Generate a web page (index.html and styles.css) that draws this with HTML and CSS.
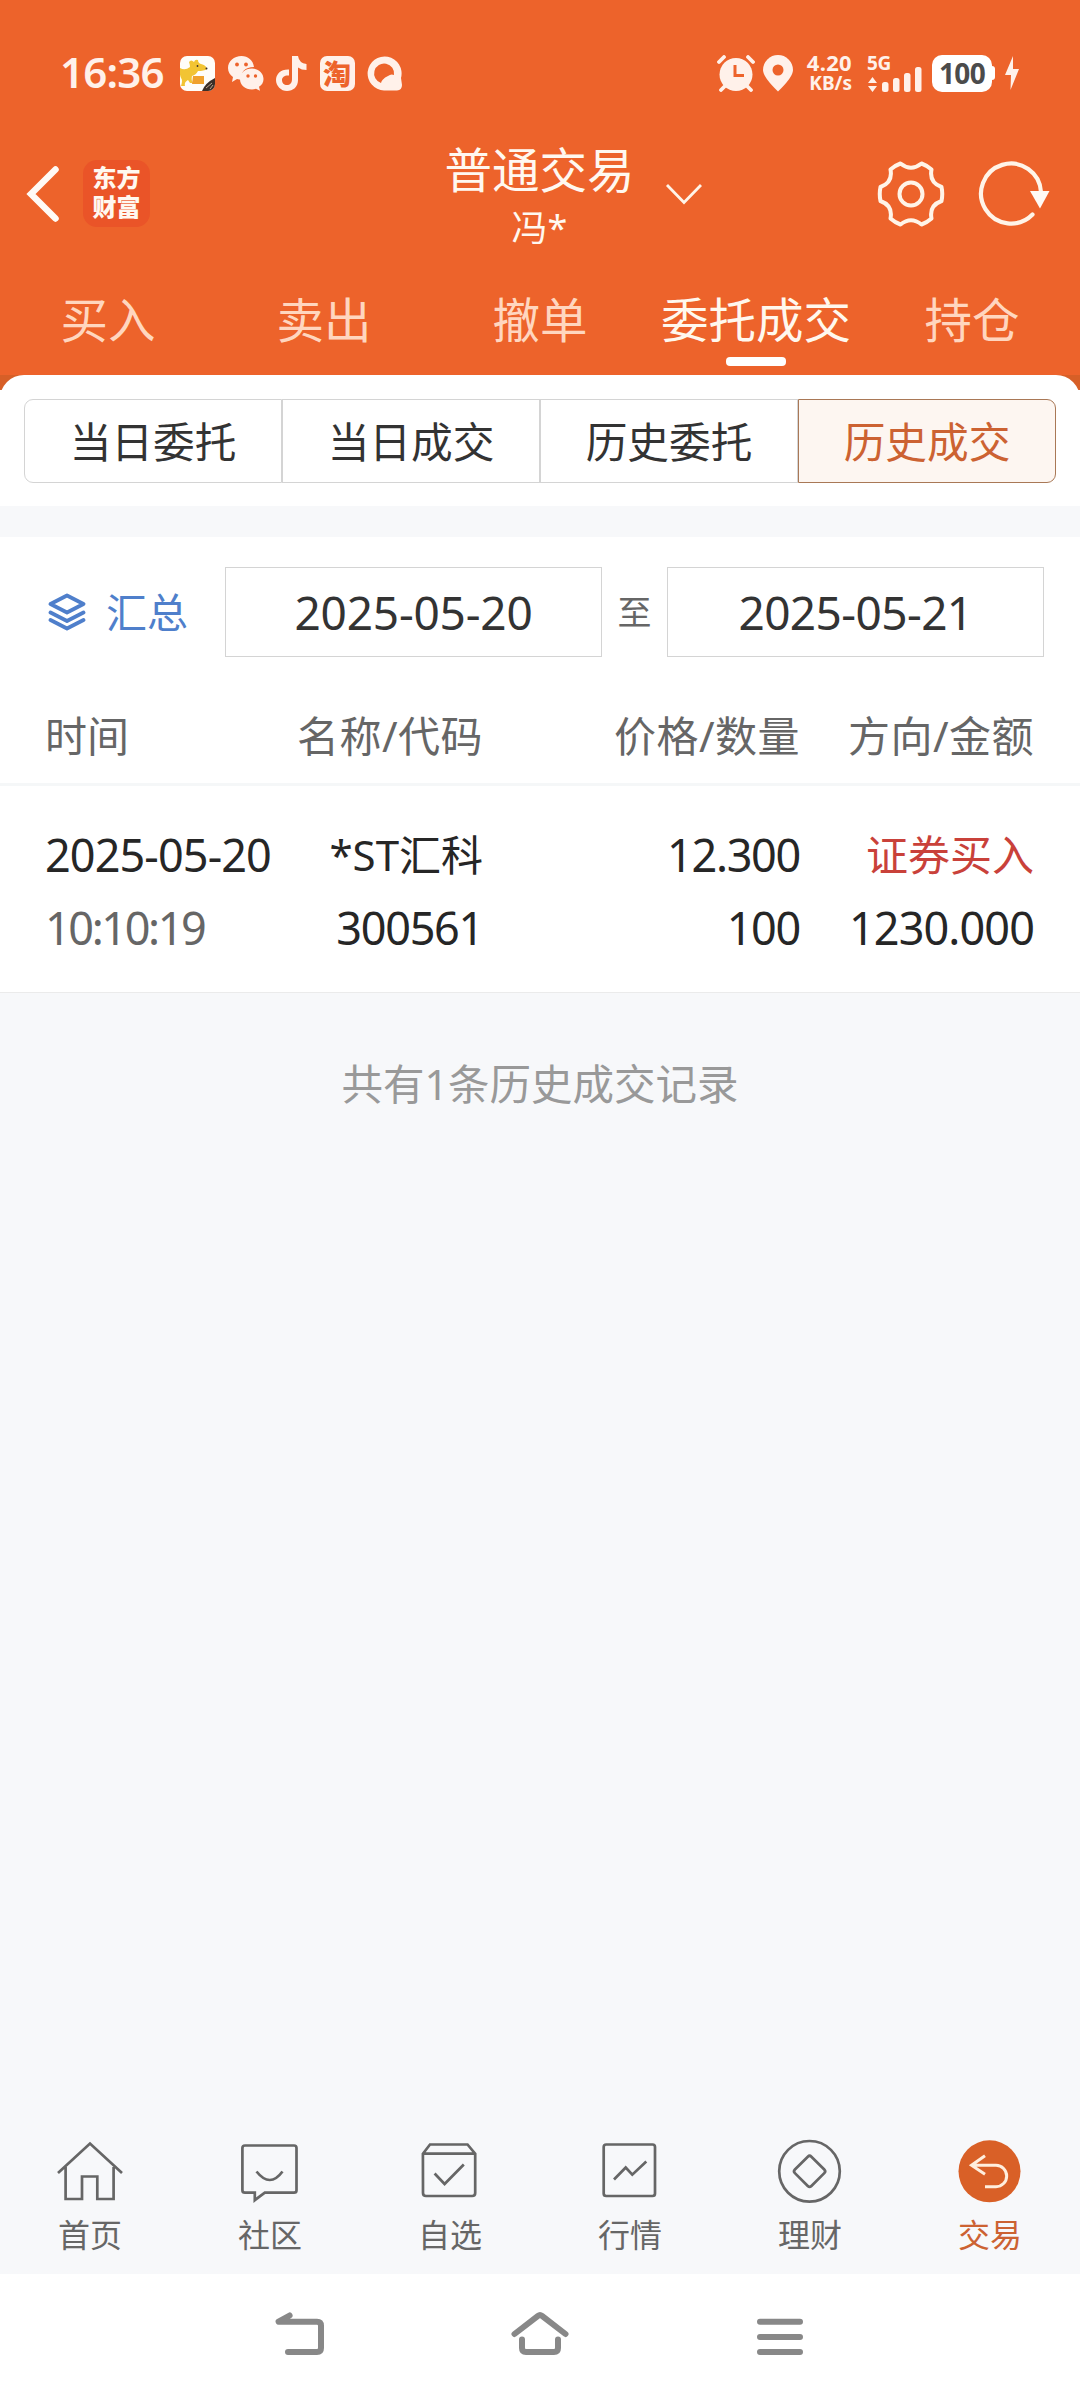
FILE: index.html
```html
<!DOCTYPE html>
<html lang="zh-CN">
<head>
<meta charset="utf-8">
<title>历史成交</title>
<link rel="stylesheet" href="styles.css">
</head>
<body>
<div class="screen">
  <header class="top">
    <div class="status">
      <span class="clock">16:36</span>
      <div class="status-apps">
        <svg width="35" height="35" viewBox="0 0 35 35">
          <clipPath id="app-clip"><rect width="35" height="35" rx="7"/></clipPath>
          <g clip-path="url(#app-clip)">
            <rect width="35" height="35" fill="#fffdf8"/>
            <path d="M0 12q5 3 10-1q0-2-1-5q2-3 5 0q1-3 4-2q0 3 3 4q5 1 6 5q-3 2-9 2q-2 4-6 5q-1 5 1 7h-3l-2-3q-4 2-3 6H1q2-6 0-8q-2-5-1-10z" fill="#f2c433"/>
            <path d="M13 20h11v8H12z" fill="#f0a12c"/>
            <path d="M35 22v13H22q3-8 13-13z" fill="#3c2f28"/>
            <path d="M26 32l6-5M30 33l3-4" stroke="#b8a590" stroke-width="1"/>
            <circle cx="17.500" cy="10" r=".9" fill="#3c2f28"/>
            <circle cx="26.500" cy="12.500" r="1" fill="#3c2f28"/>
          </g>
        </svg>
        <svg width="36" height="35" viewBox="0 0 36 35" fill="#fff1ea">
          <path d="M13.500 0C6 0 0 5 0 12c0 4 2 7 5 9l-1 5 5-3q3 1 5 .8C12 16 17 11 26 11 25 4 20 0 13.500 0z"/>
          <path d="M24 12.500c-7 0-12 4.500-12 10.500s5 10.500 12 10.500q2 0 4-.7l4 2-1-4c3-2 4.500-4.500 4.500-7.800 0-6-5-10.500-11.500-10.500z"/>
          <g fill="#ed632b"><circle cx="9" cy="8.500" r="1.900"/><circle cx="18" cy="8.500" r="1.900"/><circle cx="20" cy="20" r="1.700"/><circle cx="27.500" cy="20" r="1.700"/></g>
        </svg>
        <svg width="31" height="35" viewBox="0 0 31 35" fill="#fff1ea">
          <path d="M16 0h6q1 7 8.500 8v6q-5 0-8.500-2.500V24c0 7-5 11-11 11S0 30 0 24s5-11 13-10.500v6C9 19 6 21 6 24s2 5 5 5 5-2 5-6z"/>
        </svg>
        <span class="tao">淘</span>
        <svg width="35" height="35" viewBox="0 0 35 35">
          <path d="M17 34.500A17 17 0 1 1 34 22l1 7q0 5-5 5.500z" fill="#fff1ea"/>
          <path d="M14 27A10 10 0 1 1 27 19q-3-1.500-6 1-3 1-5.500 4-1 1-1.500 3z" fill="#ed632b"/>
        </svg>
      </div>
      <div class="status-info">
        <svg width="38" height="37" viewBox="0 0 38 37">
          <g stroke="#fff1ea" stroke-width="3.800" stroke-linecap="round"><path d="M2 7l5-5M36 7l-5-5M9 30l-5 5M29 30l5 5"/></g>
          <circle cx="19" cy="19.500" r="16.500" fill="#fff1ea"/>
          <path d="M18 10v10.500h9" fill="none" stroke="#ed632b" stroke-width="3"/>
        </svg>
        <svg width="30" height="37" viewBox="0 0 30 37">
          <path d="M15 36.500Q0 22 0 15a15 15 0 0 1 30 0Q30 22 15 36.500z" fill="#fff1ea"/><circle cx="15" cy="15" r="5.500" fill="#ed632b"/>
        </svg>
        <div class="speed"><span>4.20</span><span class="unit">KB/s</span></div>
        <div class="cell">
          <span class="gen">5G</span>
          <svg width="56" height="37" viewBox="0 0 56 37" fill="#fff1ea">
            <path d="M5.500 22l4.500 6H1zM5.500 37l4.500-6H1z"/>
            <rect x="15" y="27" width="6.500" height="10" rx="2.500"/><rect x="26" y="23" width="6.500" height="14" rx="2.500"/><rect x="37" y="18" width="6.500" height="19" rx="2.500"/><rect x="48" y="12" width="6.500" height="25" rx="2.500"/>
          </svg>
        </div>
        <div class="battery"><span>100</span></div>
        <svg class="bolt" width="14" height="34" viewBox="0 0 14 34" fill="#fff1ea"><path d="M8 0L0 19h6L5.500 34 14 13H8z"/></svg>
      </div>
    </div>

    <div class="titlebar">
      <div class="side">
        <svg width="36" height="60" viewBox="0 0 36 60"><path d="M31.500 5.500L7 30l24.500 24.500" fill="none" stroke="#fffaf5" stroke-width="6.500" stroke-linecap="round"/></svg>
        <div class="brand"><span>东方</span><span>财富</span></div>
      </div>
      <div class="account"><span class="name">普通交易</span><span class="user">冯*</span></div>
      <div class="side right">
        <svg class="drop" width="40" height="24" viewBox="0 0 40 24"><path d="M3 3l17 17.500L37 3" fill="none" stroke="#fff4e8" stroke-width="2.800"/></svg>
        <svg width="68" height="68" viewBox="0 0 68 68" fill="none" stroke="#fff4e8" stroke-width="4">
          <path stroke-linejoin="round" d="M23.500 3.500Q34 12 44.500 3.500Q50 5.500 54.500 9.500Q52 22.500 64.500 27Q66 34 64.500 41Q52 45.500 54.500 58.500Q50 62.500 44.500 64.500Q34 56 23.500 64.500Q18 62.500 13.500 58.500Q16 45.500 3.500 41Q2 34 3.500 27Q16 22.500 13.500 9.500Q18 5.500 23.500 3.500z"/>
          <circle cx="34" cy="34" r="11.500"/>
        </svg>
        <svg width="74" height="68" viewBox="0 0 74 68"><path d="M64 32A30 30 0 1 0 55.500 54.500" fill="none" stroke="#fff4e8" stroke-width="4.200" stroke-linecap="round"/><path d="M53 31h19.500l-9.500 17.500z" fill="#fffaf5"/></svg>
      </div>
    </div>

    <nav class="tabs">
      <span>买入</span><span>卖出</span><span>撤单</span><span class="on">委托成交</span><span>持仓</span>
    </nav>
  </header>

  <section class="panel-wrap">
    <div class="panel">
      <div class="segments"><span>当日委托</span><span>当日成交</span><span>历史委托</span><span class="on">历史成交</span></div>
    </div>
  </section>

  <section class="content">
    <div class="filter">
      <svg width="38" height="38" viewBox="0 0 38 38" fill="none" stroke="#4f7fcb" stroke-width="3.800" stroke-linecap="round" stroke-linejoin="round"><path d="M19 2.500l16.500 8.500L19 19.500 2.500 11z"/><path d="M2.500 19.500L19 28l16.500-8.500M2.500 27L19 35.500 35.500 27"/></svg>
      <span class="sum">汇总</span>
      <span class="date">2025-05-20</span>
      <span class="to">至</span>
      <span class="date end">2025-05-21</span>
    </div>
    <div class="row head"><span>时间</span><span>名称/代码</span><span>价格/数量</span><span>方向/金额</span></div>
    <div class="row record">
      <div><span class="d">2025-05-20</span><span class="time">10:10:19</span></div>
      <div><span class="stock">*ST汇科</span><span class="code">300561</span></div>
      <div><span class="price">12.300</span><span class="qty">100</span></div>
      <div><span class="buy">证券买入</span><span class="amount">1230.000</span></div>
    </div>
  </section>
  <p class="summary">共有1条历史成交记录</p>

  <nav class="bottom">
    <div><svg viewBox="0 0 72 72"><path d="M4 39L36 9.500 68 39M11.600 33v32H28V42.500h15.300V65h16.300V33"/></svg><span>首页</span></div>
    <div><svg viewBox="0 0 72 72"><path d="M11 11.500h49q2.500 0 2.500 2.500v42.200q0 2.500-2.500 2.500H30.800l-10 7.500v-7.500H11q-2.600 0-2.600-2.500V14q0-2.500 2.600-2.500z"/><path d="M22.500 37.500q13.500 17 26 0"/></svg><span>社区</span></div>
    <div><svg viewBox="0 0 72 72"><path d="M8.900 19.700L16 10.500h37.500l7.700 9.200V59q0 3-3 3H12q-3 0-3-3zH61"/><path d="M20.600 39.500l10 10.500 19.200-19.500"/></svg><span>自选</span></div>
    <div><svg viewBox="0 0 72 72"><rect x="9.700" y="10.500" width="51.300" height="51.500" rx="2.500"/><path d="M20 45.500l11.700-12 6.600 7.200 14-13.200"/></svg><span>行情</span></div>
    <div><svg viewBox="0 0 72 72"><circle cx="35.500" cy="37.300" r="30.300"/><path d="M33.800 22.700q1.800-1.800 3.600 0L50.300 35.500q1.800 1.800 0 3.600L37.400 52q-1.800 1.800-3.600 0L20.900 39.100q-1.800-1.800 0-3.600z"/></svg><span>理财</span></div>
    <div class="on"><svg viewBox="0 0 72 72"><circle class="disc" cx="35.500" cy="37.300" r="31"/><path class="arrow" d="M31 21.700L17.500 31.300 31 40.300M17.500 31.300H42a10.700 10.700 0 0 1 0 21.400H31"/></svg><span>交易</span></div>
  </nav>

  <div class="sysnav">
    <svg viewBox="0 0 60 60"><path d="M19.600 8.500l-11 6.200H47q4 0 4 4V41q0 4-4 4H18"/></svg>
    <svg viewBox="0 0 60 60"><path d="M4.500 27L28 8.800q2-1.600 4 0L55.500 27M12 32.500V41q0 4 4 4h28q4 0 4-4v-8.500"/></svg>
    <svg viewBox="0 0 60 60"><path d="M10 14.700h40M10 30h40M10 45h40"/></svg>
  </div>
</div>
</body>
</html>
```

FILE: styles.css
```css
* { box-sizing: border-box; }

body {
  margin: 0;
  font-family: "Noto Sans", "Noto Sans CJK SC", sans-serif;
  color: #333;
  background: #f7f8fa;
}

svg { display: block; flex: none; }

.screen {
  width: 1080px;
  height: 2400px;
  display: flex;
  flex-direction: column;
  background: #f7f8fa;
  overflow: hidden;
}

/* Orange header */
.top { height: 375px; flex: none; background: #ed632b; color: #fff8f0; }

.status {
  height: 146px;
  padding: 0 61px 0 60px;
  display: flex;
  align-items: center;
}
.clock { width: 120px; font-size: 42px; font-weight: 600; line-height: 48px; margin-top: -2px; letter-spacing: -.8px; color: #fff1ea; }
.status-apps { display: flex; align-items: center; gap: 12.500px; }
.tao {
  width: 35px;
  height: 35px;
  border-radius: 7px;
  background: #fff1ea;
  color: #ed632b;
  font: 900 28px/34px "Noto Sans CJK SC", sans-serif;
  text-align: center;
}
.status-info { margin-left: auto; height: 37px; display: flex; align-items: center; color: #fff1ea; }
.status-info > svg:nth-child(2) { margin-left: 8px; }
.speed {
  width: 50px;
  margin-left: 9px;
  margin-right: 2px;
  display: flex;
  flex-direction: column;
  align-items: flex-end;
  font-size: 22px;
  font-weight: 700;
  line-height: 19px;
}
.speed span { letter-spacing: .3px; }
.speed .unit { font-size: 19px; line-height: 22px; letter-spacing: 0; }
.cell { position: relative; width: 56px; height: 37px; margin-left: 13px; }
.gen { position: absolute; left: 0; top: -1px; font-size: 19px; font-weight: 700; line-height: 18px; letter-spacing: -.4px; }
.battery {
  position: relative;
  width: 60px;
  height: 37px;
  margin-left: 9px;
  border-radius: 10px;
  background: #fff;
  color: #4b4b4b;
  font-size: 28px;
  font-weight: 700;
  line-height: 36px;
  letter-spacing: -.6px;
  text-align: center;
}
.battery::after {
  content: "";
  position: absolute;
  left: 60px;
  top: 11px;
  width: 3px;
  height: 14px;
  border-radius: 0 3px 3px 0;
  background: #fff;
}
.bolt { margin-left: 13px; }

.titlebar {
  height: 114px;
  padding: 0 29px 19px 24px;
  display: grid;
  grid-template-columns: 1fr auto 1fr;
  align-items: center;
}
.side { display: flex; align-items: center; }
.brand {
  width: 67px;
  height: 67px;
  margin-left: 23px;
  padding-top: 4px;
  border-radius: 14px;
  background: #ea5428;
  display: flex;
  flex-direction: column;
  align-items: center;
  font-size: 24px;
  font-weight: 800;
  line-height: 28.500px;
}
.account { display: flex; flex-direction: column; align-items: center; height: 101px; margin-top: -6px; padding-left: 4px; }
.name { font-size: 47.500px; line-height: 60px; }
.user { font-size: 36px; line-height: 56px; }
.right { justify-content: flex-end; }
.drop { margin-right: auto; margin-left: 29px; }
.right svg:nth-child(2) { margin-right: 32px; }

.tabs { height: 115px; display: grid; grid-template-columns: repeat(5, 1fr); }
.tabs span { padding-top: 25px; text-align: center; font-size: 47.500px; line-height: 70px; color: #ffd6bf; }
.tabs .on { color: #fff8ee; display: flex; flex-direction: column; align-items: center; }
.tabs .on::after { content: ""; width: 60px; height: 9px; margin-top: 2px; border-radius: 4px; background: #fff; }

/* Segmented control */
.panel-wrap {
  height: 131px;
  flex: none;
  background: linear-gradient(#d75f27 15px, #fff 15px);
}
.panel { height: 131px; padding: 24px; border-radius: 24px 24px 0 0; background: #fff; }
.segments { height: 84px; display: grid; grid-template-columns: repeat(4, 1fr); }
.segments span { height: 84px; border: 1px solid #d4d4d4; text-align: center; font-size: 41.700px; line-height: 84px; }
.segments span:first-child { border-radius: 9px 0 0 9px; }
.segments .on { border-color: #a97856; border-radius: 0 9px 9px 0; background: #fdf6f1; color: #cc6232; }

/* Date filter and records */
.content { margin-top: 31px; height: 456px; flex: none; background: #fff; border-bottom: 1px solid #ebebeb; }
.filter { height: 150px; padding: 0 36px 0 48px; display: flex; align-items: center; }
.sum { width: 119px; margin-left: 20px; font-size: 41px; color: #4f7fcb; line-height: 60px; }
.date { flex: 1; height: 90px; border: 1px solid #d4d4d4; text-align: center; font-size: 46px; line-height: 89px; letter-spacing: -.2px; }
.date.end { letter-spacing: -.6px; }
.to { width: 65px; text-align: center; font-size: 34px; line-height: 60px; color: #666; }

.row { display: grid; grid-template-columns: 240px 198px 317px 234px; padding: 0 45px; }
.row > :not(:first-child) { text-align: right; }
.head { height: 99px; border-bottom: 3px solid #f5f7f8; font-size: 42px; line-height: 98px; color: #666; white-space: nowrap; }
.head span:not(:first-child) { letter-spacing: .5px; }
.record { padding-top: 32px; color: #262626; }
.record span { display: block; font-size: 45px; line-height: 73px; white-space: nowrap; letter-spacing: -.9px; }
.record .time { color: #666; letter-spacing: -2.400px; }
.record .code { letter-spacing: -1.300px; }
.record .price, .record .qty { letter-spacing: -1.300px; }
.record .stock { font-size: 42px; letter-spacing: 0; }
.record .buy { font-size: 42px; letter-spacing: 0; color: #c9413a; }
.summary { margin: 0; padding-top: 61px; text-align: center; font-size: 41.500px; line-height: 60px; color: #999; }

/* App navigation */
.bottom {
  margin-top: auto;
  height: 140px;
  flex: none;
  display: grid;
  grid-template-columns: repeat(6, 1fr);
}
.bottom div { display: flex; flex-direction: column; align-items: center; font-size: 32px; line-height: 50px; color: #666; }
.bottom svg { width: 72px; height: 72px; margin-bottom: 4px; fill: none; stroke: #666; stroke-width: 2.700px; }
.bottom .on { color: #cc6232; }
.bottom .disc { fill: #d96027; stroke: none; }
.bottom .arrow { stroke: #ffeedd; stroke-width: 3px; }

/* System navigation */
.sysnav { height: 126px; flex: none; padding: 33px 180px 0; display: grid; grid-template-columns: repeat(3, 240px); justify-content: center; justify-items: center; background: #fff; }
.sysnav svg { width: 60px; height: 60px; fill: none; stroke: #888; stroke-width: 6px; stroke-linecap: round; stroke-linejoin: round; }
```
